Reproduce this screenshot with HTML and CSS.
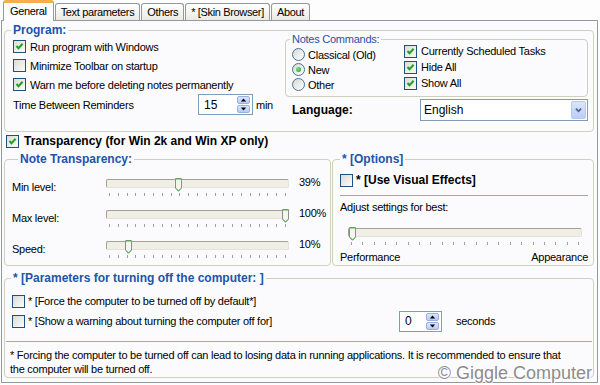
FILE: index.html
```html
<!DOCTYPE html>
<html lang="en">
<head>
    <meta charset="UTF-8">
    <title>Options - General</title>
    <link rel="stylesheet" href="styles.css">
</head>
<body>
<div class="window">
    <div class="tabs">
        <div class="tab active">General</div>
        <div class="tab">Text parameters</div>
        <div class="tab">Others</div>
        <div class="tab">* [Skin Browser]</div>
        <div class="tab">About</div>
    </div>

    <div class="panel">
        <fieldset class="group program">
            <legend>Program:</legend>
            <div class="program-body">
                <div class="program-left">
                    <div class="check-row"><span class="box"><svg viewBox="0 0 11 11"><path d="M2.5 5 L4.5 7.2 L8.6 2.8" /></svg></span>Run program with Windows</div>
                    <div class="check-row"><span class="box"></span>Minimize Toolbar on startup</div>
                    <div class="check-row"><span class="box"><svg viewBox="0 0 11 11"><path d="M2.5 5 L4.5 7.2 L8.6 2.8" /></svg></span>Warn me before deleting notes permanently</div>
                    <div class="reminder-row">
                        <span class="reminder-label">Time Between Reminders</span>
                        <span class="spin">
                            <span class="spin-value">15</span>
                            <span class="spin-btns">
                                <span class="spin-btn"><svg viewBox="0 0 11 8"><polygon points="2,6 5.5,2 9,6" /></svg></span>
                                <span class="spin-btn"><svg viewBox="0 0 11 8"><polygon points="2,2 5.5,6 9,2" /></svg></span>
                            </span>
                        </span>
                        <span class="unit">min</span>
                    </div>
                </div>

                <div class="program-right">
                    <fieldset class="group notes">
                        <legend>Notes Commands:</legend>
                        <div class="notes-body">
                            <div class="radios">
                                <div class="radio-row"><span class="radio"></span>Classical (Old)</div>
                                <div class="radio-row"><span class="radio on"></span>New</div>
                                <div class="radio-row"><span class="radio"></span>Other</div>
                            </div>
                            <div class="notes-checks">
                                <div class="check-row"><span class="box"><svg viewBox="0 0 11 11"><path d="M2.5 5 L4.5 7.2 L8.6 2.8" /></svg></span>Currently Scheduled Tasks</div>
                                <div class="check-row"><span class="box"><svg viewBox="0 0 11 11"><path d="M2.5 5 L4.5 7.2 L8.6 2.8" /></svg></span>Hide All</div>
                                <div class="check-row"><span class="box"><svg viewBox="0 0 11 11"><path d="M2.5 5 L4.5 7.2 L8.6 2.8" /></svg></span>Show All</div>
                            </div>
                        </div>
                    </fieldset>
                    <div class="lang-row">
                        <span class="lang-label">Language:</span>
                        <div class="select">
                            <span class="select-value">English</span>
                            <span class="select-btn"><svg viewBox="0 0 15 17"><path d="M4.5 7 L7.5 10 L10.5 7" /></svg></span>
                        </div>
                    </div>
                </div>
            </div>
        </fieldset>

        <div class="transp-row"><span class="box"><svg viewBox="0 0 11 11"><path d="M2.5 5 L4.5 7.2 L8.6 2.8" /></svg></span>Transparency (for Win 2k and Win XP only)</div>

        <div class="split">
            <fieldset class="group note-group">
                <legend>Note Transparency:</legend>
                <div class="slider-row">
                    <span class="slider-label">Min level:</span>
                    <div class="slider" style="--v: 0.39">
                        <div class="track"></div>
                        <div class="ticks"><i></i><i></i><i></i><i></i><i></i><i></i><i></i><i></i><i></i><i></i><i></i><i></i><i></i><i></i><i></i><i></i><i></i><i></i><i></i><i></i><i></i></div>
                        <svg class="thumb" viewBox="0 0 7 14"><path class="thumb-body" d="M0.5 0.5 H6.5 V10 L3.5 13.3 L0.5 10 Z" /><path class="thumb-edge" d="M1 1 H6 M1 10.5 L3.5 13 L6 10.5" /></svg>
                    </div>
                    <span class="slider-value">39%</span>
                </div>
                <div class="slider-row">
                    <span class="slider-label">Max level:</span>
                    <div class="slider" style="--v: 1">
                        <div class="track"></div>
                        <div class="ticks"><i></i><i></i><i></i><i></i><i></i><i></i><i></i><i></i><i></i><i></i><i></i><i></i><i></i><i></i><i></i><i></i><i></i><i></i><i></i><i></i><i></i></div>
                        <svg class="thumb" viewBox="0 0 7 14"><path class="thumb-body" d="M0.5 0.5 H6.5 V10 L3.5 13.3 L0.5 10 Z" /><path class="thumb-edge" d="M1 1 H6 M1 10.5 L3.5 13 L6 10.5" /></svg>
                    </div>
                    <span class="slider-value">100%</span>
                </div>
                <div class="slider-row">
                    <span class="slider-label">Speed:</span>
                    <div class="slider" style="--v: 0.1">
                        <div class="track"></div>
                        <div class="ticks"><i></i><i></i><i></i><i></i><i></i><i></i><i></i><i></i><i></i><i></i><i></i><i></i><i></i><i></i><i></i><i></i><i></i><i></i><i></i><i></i><i></i></div>
                        <svg class="thumb" viewBox="0 0 7 14"><path class="thumb-body" d="M0.5 0.5 H6.5 V10 L3.5 13.3 L0.5 10 Z" /><path class="thumb-edge" d="M1 1 H6 M1 10.5 L3.5 13 L6 10.5" /></svg>
                    </div>
                    <span class="slider-value">10%</span>
                </div>
            </fieldset>

            <fieldset class="group options-group">
                <legend>* [Options]</legend>
                <div class="effects-row"><span class="box"></span>* [Use Visual Effects]</div>
                <div class="rule"></div>
                <div class="adjust">Adjust settings for best:</div>
                <div class="slider wide" style="--v: 0">
                    <div class="track"></div>
                    <div class="ticks"><i></i><i></i><i></i><i></i><i></i><i></i><i></i><i></i><i></i><i></i><i></i><i></i><i></i><i></i><i></i><i></i><i></i><i></i><i></i><i></i><i></i></div>
                    <svg class="thumb" viewBox="0 0 7 14"><path class="thumb-body" d="M0.5 0.5 H6.5 V10 L3.5 13.3 L0.5 10 Z" /><path class="thumb-edge" d="M1 1 H6 M1 10.5 L3.5 13 L6 10.5" /></svg>
                </div>
                <div class="ends"><span>Performance</span><span>Appearance</span></div>
            </fieldset>
        </div>

        <fieldset class="group params">
            <legend>* [Parameters for turning off the computer: ]</legend>
            <div class="params-row first"><span class="box"></span>* [Force the computer to be turned off by default*]</div>
            <div class="params-row">
                <span class="box"></span>
                <span class="warn-label">* [Show a warning about turning the computer off for]</span>
                <span class="spin small">
                    <span class="spin-value">0</span>
                    <span class="spin-btns">
                        <span class="spin-btn"><svg viewBox="0 0 11 8"><polygon points="2,6 5.5,2 9,6" /></svg></span>
                        <span class="spin-btn"><svg viewBox="0 0 11 8"><polygon points="2,2 5.5,6 9,2" /></svg></span>
                    </span>
                </span>
                <span class="seconds">seconds</span>
            </div>
            <div class="rule full"></div>
            <p class="footnote">* Forcing the computer to be turned off can lead to losing data in running applications. It is recommended to ensure that<br>the computer will be turned off.</p>
        </fieldset>
    </div>

    <div class="watermark">© Giggle Computer</div>
</div>
</body>
</html>
```

FILE: styles.css
```css
* {
    box-sizing: border-box;
}
body {
    margin: 0;
    background: #fdfdfd;
    font-family: "Liberation Sans", Arial, sans-serif;
    font-size: 11px;
    letter-spacing: -0.25px;
    color: #000;
}
.window {
    position: relative;
    width: 600px;
    height: 385px;
    padding-left: 1px;
    overflow: hidden;
}

/* tabs */
.tabs {
    display: flex;
    align-items: flex-end;
    gap: 1px;
    height: 20px;
    padding-left: 2px;
    position: relative;
    z-index: 1;
}
.tab {
    height: 17px;
    line-height: 16px;
    padding: 0 5px;
    border: 1px solid #919b9c;
    border-bottom: none;
    border-radius: 3px 3px 0 0;
    background: linear-gradient(#ffffff, #eceae4);
    letter-spacing: -0.35px;
}
.tab.active {
    height: 21px;
    margin-bottom: -1px;
    padding: 0 6px;
    border-top: 3px solid #f4ae4c;
    background: #fcfcfe;
}

/* page */
.panel {
    width: 597px;
    height: 363px;
    border: 1px solid #919b9c;
    background: #fbfbfd;
    padding: 0 3px 0 2px;
}
.group {
    margin: 0;
    padding: 0;
    min-width: 0;
    border: 1px solid #d0d0bf;
    border-radius: 4px;
}
.group legend {
    margin-left: 6px;
    padding: 0 2px;
    font-size: 12px;
    font-weight: bold;
    line-height: 14px;
    letter-spacing: 0;
    color: #2153ab;
}

/* checkboxes, radios */
.box {
    flex: none;
    width: 13px;
    height: 13px;
    border: 1px solid #1c5180;
    background: linear-gradient(135deg, #dcdcd6, #fbfbf9);
}
.box svg {
    display: block;
    width: 11px;
    height: 11px;
}
.box path {
    fill: none;
    stroke: #21a121;
    stroke-width: 2;
}
.radio {
    flex: none;
    width: 13px;
    height: 13px;
    border: 1px solid #4a7196;
    border-radius: 50%;
    background: linear-gradient(135deg, #d8d8d2, #ffffff);
    display: flex;
    align-items: center;
    justify-content: center;
}
.radio.on::after {
    content: "";
    width: 5px;
    height: 5px;
    border-radius: 50%;
    background: radial-gradient(circle at 35% 35%, #7ee07e, #21a121);
}
.check-row {
    display: flex;
    align-items: center;
    gap: 4px;
    height: 19px;
}

/* spin boxes */
.spin {
    display: flex;
    align-items: center;
    width: 55px;
    height: 21px;
    border: 1px solid #7f9db9;
    background: #fff;
    padding: 0 2px 0 5px;
    font-size: 12px;
    letter-spacing: 0;
}
.spin-value {
    flex: 1;
}
.spin-btns {
    display: flex;
    flex-direction: column;
    gap: 1px;
}
.spin-btn {
    width: 13px;
    height: 8px;
    border: 1px solid #98b0e2;
    border-radius: 2px;
    background: linear-gradient(#dce6fd, #b7cbf5);
}
.spin-btn svg {
    display: block;
    width: 11px;
    height: 6px;
}
.spin-btn polygon {
    fill: #000;
}

/* program group */
.program {
    margin-top: 2px;
    padding-bottom: 10px;
}
.program-body {
    display: grid;
    grid-template-columns: 280px 1fr;
}
.program-left {
    padding-left: 8px;
}
.reminder-row {
    display: flex;
    align-items: center;
    height: 21px;
}
.reminder-label {
    width: 185px;
}
.unit {
    margin-left: 3px;
}
.program-right {
    margin-top: -4px;
    padding-right: 6px;
}
.notes legend {
    margin-left: 4px;
    font-size: 11px;
    font-weight: normal;
    line-height: 13px;
    letter-spacing: -0.25px;
}
.notes-body {
    display: grid;
    grid-template-columns: 118px 1fr;
    padding-bottom: 4px;
}
.radios {
    padding: 1px 0 0 6px;
}
.radio-row {
    display: flex;
    align-items: center;
    gap: 3px;
    height: 15px;
}
.notes-checks {
    margin-top: -3px;
}
.notes-checks .check-row {
    height: 16px;
}
.lang-row {
    display: flex;
    align-items: center;
    margin-top: 2px;
    padding-left: 7px;
}
.lang-label {
    width: 128px;
    font-size: 12px;
    font-weight: bold;
    letter-spacing: 0;
}
.select {
    display: flex;
    align-items: center;
    width: 168px;
    height: 22px;
    border: 1px solid #7f9db9;
    background: #fff;
    padding: 1px 1px 1px 3px;
    font-size: 12px;
    letter-spacing: 0;
}
.select-value {
    flex: 1;
}
.select-btn {
    width: 15px;
    height: 18px;
    border: 1px solid #b6c9f2;
    border-radius: 2px;
    background: linear-gradient(#dbe5fd, #b9cdf6);
}
.select-btn svg {
    display: block;
    width: 13px;
    height: 16px;
}
.select-btn path {
    fill: none;
    stroke: #4d6185;
    stroke-width: 2;
}

/* transparency */
.transp-row {
    display: flex;
    align-items: center;
    gap: 5px;
    height: 18px;
    padding-left: 2px;
    font-size: 12px;
    font-weight: bold;
    letter-spacing: 0;
}
.split {
    display: flex;
    margin-top: 2px;
}
.note-group {
    width: 327px;
    padding: 6px 0 0 7px;
}
.slider-row {
    display: grid;
    grid-template-columns: 94px 183px 1fr;
    height: 31px;
}
.slider-label {
    padding-top: 9px;
    line-height: 13px;
}
.slider-value {
    padding: 4px 0 0 10px;
    line-height: 13px;
}
.slider {
    position: relative;
    padding-top: 7px;
}
.track {
    height: 9px;
    border: 1px solid;
    border-color: #a3a196 #e4e2d8 #e4e2d8 #a3a196;
    border-radius: 2px;
    background: #f0efe5;
}
.ticks {
    display: flex;
    justify-content: space-between;
    margin: 5px 3px 0;
}
.ticks i {
    width: 1px;
    height: 3px;
    background: #a0a0a0;
}
.thumb {
    position: absolute;
    top: 6px;
    left: calc(var(--v) * (100% - 8px) + 1px);
    width: 7px;
    height: 14px;
}
.thumb-body {
    fill: #f4f4f0;
    stroke: #8e8e88;
    stroke-width: 1;
}
.thumb-edge {
    fill: none;
    stroke: #3fb93f;
    stroke-width: 1;
}

/* options */
.options-group {
    flex: 1;
    margin-left: 1px;
    padding: 0 5px 1px 7px;
}
.options-group legend {
    margin-left: 0;
}
.effects-row {
    display: flex;
    align-items: center;
    gap: 3px;
    height: 16px;
    margin-top: 6px;
    font-size: 12px;
    font-weight: bold;
    letter-spacing: 0;
}
.rule {
    height: 1px;
    margin-top: 7px;
    background: #aca899;
}
.adjust {
    margin-top: 5px;
    line-height: 13px;
}
.slider.wide {
    margin: 7px 6px 0 8px;
}
.ends {
    display: flex;
    justify-content: space-between;
    margin-top: 6px;
    line-height: 13px;
}

/* shutdown parameters */
.params {
    margin-top: 5px;
    padding-bottom: 1px;
}
.params-row {
    display: flex;
    align-items: center;
    gap: 3px;
    height: 22px;
    margin-top: 1px;
    padding-left: 7px;
}
.params-row.first {
    height: 16px;
    margin-top: 8px;
}
.warn-label {
    width: 368px;
}
.spin.small {
    width: 43px;
}
.seconds {
    margin-left: 11px;
}
.rule.full {
    margin: 9px 1px 0;
}
.footnote {
    margin: 7px 0 0;
    padding-left: 5px;
    line-height: 13.5px;
    white-space: nowrap;
}
.watermark {
    position: absolute;
    right: 8px;
    bottom: 2px;
    font-size: 18px;
    line-height: 20px;
    letter-spacing: 0;
    color: #8c8c8c;
    text-shadow: 1px 0 #fff, -1px 0 #fff, 0 1px #fff, 0 -1px #fff;
}
```
